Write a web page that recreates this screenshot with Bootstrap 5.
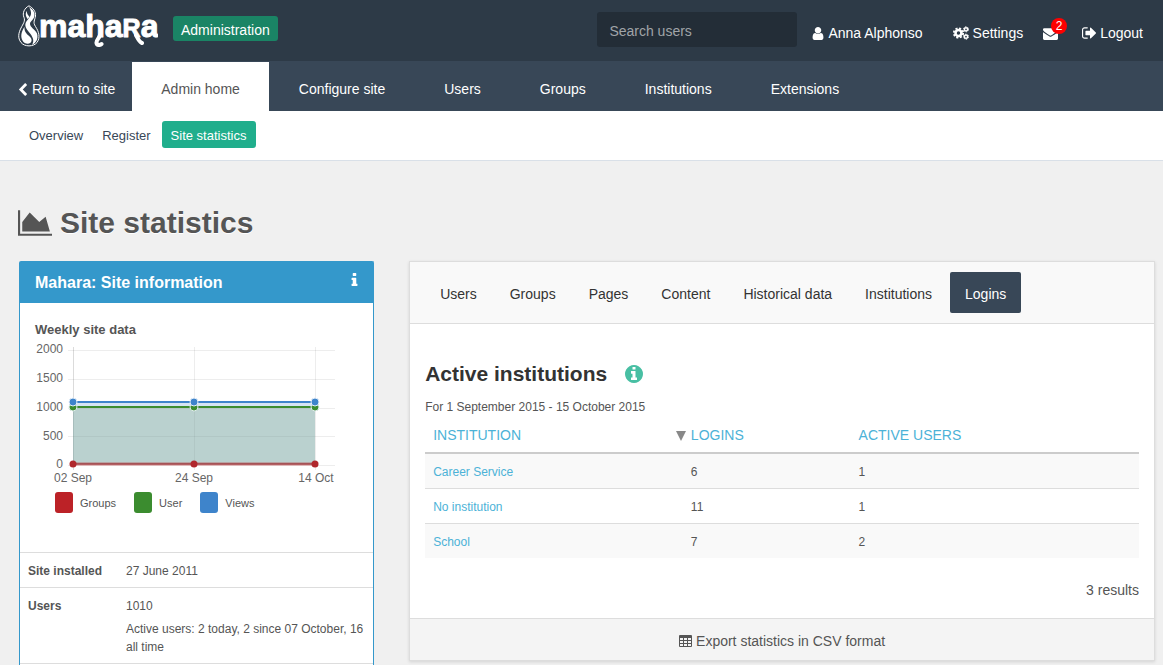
<!DOCTYPE html>
<html lang="en">
<head>
<meta charset="utf-8">
<meta name="viewport" content="width=device-width, initial-scale=1">
<title>Site statistics - Mahara</title>
<link href="https://cdn.jsdelivr.net/npm/bootstrap@5.3.0/dist/css/bootstrap.min.css" rel="stylesheet">
<style>
  body { font-family: "Liberation Sans", Arial, sans-serif; font-size: 14px; line-height: 20px; color: #555; background: #f0f0f0; }
  a { text-decoration: none; }
  .icon { fill: currentColor; flex: none; }

  .site-header { background: #2d3a47; padding: 0 20px 0 18px; min-height: 61px; }
  .site-logo { margin-top: 5px; }
  .admin-tag { background: #1a8465; color: #fff; font-size: 14px; line-height: 22px; padding: 3px 8px 0; border-radius: 3px; margin: 16px 0 0 15px; }
  .site-search { width: 200px; margin: 12px 15px 0 0; }
  .site-search .form-control { height: 35px; padding: 8px 12px 6px; font-size: 14px; line-height: 21px; color: #fff; background: #232d37; border: 0; border-radius: 3px; }
  .site-search .form-control::placeholder { color: #a0a4a8; opacity: 1; }
  .user-links { margin-top: 23px; }
  .user-links a { color: #fff; gap: 4px; }
  .user-links .settings { margin-left: 30px; }
  .unread { top: -9px; left: 8px; width: 16px; height: 16px; border-radius: 50%; background: #f00; color: #fff; font-size: 12px; line-height: 17px; text-align: center; }

  .main-nav { background: #384757; padding-top: 1px; gap: 1px; }
  .main-nav .nav-link { color: #fff; padding: 17px 29px 12px; line-height: 20px; }
  .main-nav .nav-link.back { padding-left: 18px; padding-right: 16px; gap: 4px; }
  .main-nav .nav-link.active { background: #fff; color: #555; }

  .sub-nav { background: #fff; border-bottom: 1px solid #d9e0e8; padding: 10px 21px 12px; font-size: 13px; gap: 2px; }
  .sub-nav .nav-link { color: #384757; padding: 5px 9px 2px 8px; border-radius: 3px; }
  .sub-nav .nav-link.active { background: #20ae8c; color: #fff; padding-left: 9px; padding-right: 10px; }

  .page-title { font-size: 30px; line-height: 34px; font-weight: 700; margin: 45px 0 21px 18px; gap: 8px; text-shadow: 0 1px 0 #fff; }
  .stats-grid { display: grid; grid-template-columns: minmax(0, 10fr) minmax(0, 21fr); gap: 35px; padding: 0 8px 0 19px; }
  @media (max-width: 900px) { .stats-grid { grid-template-columns: minmax(0, 1fr); } }

  .info-panel { background: #fff; border: 1px solid #3498cb; border-bottom: 0; border-radius: 2px 2px 0 0; }
  .info-panel > h2 { background: #3498cb; color: #fff; font-size: 16px; line-height: 20px; font-weight: 700; padding: 11px 15px 10px; }
  .chart-block { padding: 18px 15px 38px; }
  .chart-block h3 { font-size: 13px; line-height: 18px; font-weight: 700; margin-bottom: 3px; }
  .chart-block figcaption { margin: 5px 0 0 20px; gap: 18px; font-size: 11px; line-height: 22px; }
  .legend-item { gap: 7px; }
  .swatch { width: 18px; height: 21px; border-radius: 3px; }
  .chart-svg text { font-size: 12px; fill: #666; }
  .facts th, .facts td, .facts p { font-size: 12px; line-height: 18px; color: #555; }
  .facts th, .facts td { padding: 9px 8px 7px; border-top: 1px solid #ddd; vertical-align: top; }
  .facts tr:last-child > * { border-bottom: 1px solid #ddd; }
  .facts th { width: 98px; }
  .facts p { margin-top: 5px; }

  .report { background: #fff; border: 1px solid #ddd; box-shadow: 0 1px 3px rgba(0, 0, 0, .12); }
  .report-tabs { background: #f9f9f9; border-bottom: 1px solid #ddd; padding: 10px 15px; gap: 3px; }
  .report-tabs .nav-link { color: #333; padding: 12px 15px 9px; border-radius: 2px; }
  .report-tabs .nav-link.active { background: #384757; color: #fff; }
  .report-body { padding: 38px 15px 18px; }
  .report-body h2 { font-size: 21px; line-height: 24px; font-weight: 700; color: #333; gap: 18px; margin-bottom: 12px; }
  .report-body h2 a { color: #48bfa3; }
  .period { font-size: 12px; line-height: 18px; }
  .logins { table-layout: fixed; margin-bottom: 22px; }
  .logins a { color: #4cb2d7; }
  .logins th { font-size: 14px; line-height: 20px; font-weight: 400; padding: 9px 8px 7px; border-bottom: 2px solid #ccc; }
  .logins td { font-size: 12px; line-height: 18px; color: #555; padding: 9px 8px 7px; border-bottom: 1px solid #ddd; }
  .logins tr:last-child td { border-bottom: 0; }
  .logins tbody tr:nth-child(odd) { background: #f9f9f9; }
  .logins .count { padding-left: 23px; }
  .sort-mark { width: 10px; height: 10px; fill: #888; margin-right: 5px; }
  .report-foot { background: #f4f4f4; border-top: 1px solid #ddd; padding: 12px 15px 9px; }
  .report-foot a { color: #555; gap: 4px; }
</style>
</head>
<body class="d-flex flex-column min-vh-100">

<header class="site-header d-flex align-items-start">
  <a class="site-logo" href="#" aria-label="Mahara">
    <svg class="d-block" width="140" height="42" viewBox="0 0 140 42" fill="#fff">
      <path d="M11 .8C6.500 3 4 8 6 12.500C7.500 16 5 19 3 23C.5 28-.5 33 3 37.500C6.500 42 15.500 42 19 37.500C22.500 32.500 21 27 17.500 21.500C14.500 17 17 15 17.500 11C18 6.500 15 3 11 .8Z" fill="none" stroke="#fff" stroke-width="1"/>
      <path d="M11 2C16 5 17.500 8.500 16 12.500C14.500 15.500 12 16.500 12 19C12 22 17 24.500 19 28.500C20.500 33 18.500 38 14 39.800C16.500 36 15 32.500 12.500 29C10 25.500 6.500 22.500 7.500 18.500C8.500 15 12.500 12.500 13 9C13.200 6.500 12.500 4.500 11 2Z"/>
      <path d="M9 6C6.500 9 8.500 12 9.500 14L11.500 12C10 10 8.500 8.500 9 6Z"/>
      <path d="M6.500 22C3 27 2.500 32 4.500 35.500C6.500 39.500 12.500 40 13.500 36C14.300 32.500 10.500 31 8.500 28.500C6.800 26.500 6.300 24.500 6.500 22Z"/>
      <text x="21" y="32" font-size="32" font-weight="700" stroke="#fff" stroke-width="1" stroke-linejoin="round">maha<tspan font-size="25">R</tspan>a</text>
      <path d="M82 30C81 34 78 35 78.500 38C79 40.500 82 40.500 83.500 39M118 30C120 34 121 37 124 38" fill="none" stroke="#fff" stroke-width="4" stroke-linecap="round"/>
    </svg>
  </a>
  <a class="admin-tag" href="#">Administration</a>
  <form class="site-search ms-auto" role="search">
    <input class="form-control" type="text" placeholder="Search users" aria-label="Search users">
  </form>
  <nav class="user-links d-flex" aria-label="Account">
    <a class="d-flex align-items-center" href="#"><svg class="icon" width="12" height="13" viewBox="192 128 1408 1536"><path d="M1536 1399q0 109-62.500 187t-150.500 78h-854q-88 0-150.500-78t-62.500-187q0-85 8.500-160.500t31.500-152 58.500-131 94-89 134.500-34.500q131 128 313 128t313-128q76 0 134.500 34.500t94 89 58.500 131 31.500 152 8.500 160.500zm-256-887q0 159-112.500 271.500t-271.500 112.500-271.500-112.500-112.500-271.500 112.500-271.500 271.500-112.500 271.500 112.500 112.500 271.500z"/></svg>Anna Alphonso</a>
    <a class="settings d-flex align-items-center" href="#"><svg class="icon" width="16" height="14" viewBox="0 0 16 14"><g fill="none" stroke="#fff"><circle cx="5.500" cy="7" r="3" stroke-width="2.600"/><circle cx="5.500" cy="7" r="4.700" stroke-width="1.800" stroke-dasharray="2.100 1.590"/><circle cx="13" cy="3.300" r="1.600" stroke-width="1.500"/><circle cx="13" cy="3.300" r="2.500" stroke-width="1" stroke-dasharray="1.500 1.118"/><circle cx="13" cy="10.700" r="1.600" stroke-width="1.500"/><circle cx="13" cy="10.700" r="2.500" stroke-width="1" stroke-dasharray="1.500 1.118"/></g></svg>Settings</a>
    <a class="d-flex align-items-center ms-3 ps-1" href="#" aria-label="Inbox"><span class="position-relative d-flex"><svg class="icon" width="15" height="13" viewBox="0 128 1792 1536"><path d="M1792 710v794q0 66-47 113t-113 47h-1472q-66 0-113-47t-47-113v-794q44 49 101 87 362 246 497 345 57 42 92.500 65.500t94.500 48 110 24.500h2q51 0 110-24.500t94.500-48 92.500-65.500q170-123 498-345 57-39 100-87zm0-294q0 79-49 151t-122 123q-376 261-468 325-10 7-42.500 31t-54 38.500-52 32.500-57.500 27-50 9h-2q-23 0-50-9t-57.500-27-52-32.500-54-38.500-42.500-31q-91-64-262-182.500t-205-142.500q-62-42-117-115.500t-55-136.500q0-78 41.500-130t118.500-52h1472q65 0 112.500 47t47.500 113z"/></svg><span class="unread position-absolute">2</span></span></a>
    <a class="d-flex align-items-center ms-4" href="#"><svg class="icon" width="14" height="12" viewBox="64 256 1568 1280"><path d="M704 1440q0 4 1 20t.5 26.500-3 23.500-10 19.500-20.500 6.500h-320q-119 0-203.500-84.500t-84.500-203.500v-704q0-119 84.500-203.500t203.500-84.500h320q13 0 22.500 9.500t9.500 22.500q0 4 1 20t.5 26.500-3 23.500-10 19.500-20.500 6.500h-320q-66 0-113 47t-47 113v704q0 66 47 113t113 47h312l11.500 1 11.500 3 8 5.500 7 9 2 13.500zm928-544q0 26-19 45l-544 544q-19 19-45 19t-45-19-19-45v-288h-448q-26 0-45-19t-19-45v-384q0-26 19-45t45-19h448v-288q0-26 19-45t45-19 45 19l544 544q19 19 19 45z"/></svg>Logout</a>
  </nav>
</header>

<nav class="main-nav nav" aria-label="Main">
  <a class="nav-link back d-flex align-items-center" href="#"><svg class="icon" width="10" height="13" viewBox="410 0 1036 1664"><path d="M1427 301l-531 531 531 531q19 19 19 45t-19 45l-166 166q-19 19-45 19t-45-19l-742-742q-19-19-19-45t19-45l742-742q19-19 45-19t45 19l166 166q19 19 19 45t-19 45z"/></svg>Return to site</a>
  <a class="nav-link active" aria-current="page" href="#">Admin home</a>
  <a class="nav-link" href="#">Configure site</a>
  <a class="nav-link" href="#">Users</a>
  <a class="nav-link" href="#">Groups</a>
  <a class="nav-link" href="#">Institutions</a>
  <a class="nav-link" href="#">Extensions</a>
</nav>

<nav class="sub-nav nav" aria-label="Admin home">
  <a class="nav-link" href="#">Overview</a>
  <a class="nav-link" href="#">Register</a>
  <a class="nav-link active" aria-current="page" href="#">Site statistics</a>
</nav>

<main class="flex-grow-1 d-flex flex-column">
  <h1 class="page-title d-flex align-items-center"><svg class="icon" width="34" height="26" viewBox="0 128 2048 1536"><path d="M2048 1536v128h-2048v-1536h128v1408h1920zm-384-1024l256 896h-1664v-576l448-576 576 576z"/></svg>Site statistics</h1>

  <div class="stats-grid flex-grow-1">
    <section class="info-panel">
      <h2 class="d-flex justify-content-between m-0">Mahara: Site information
        <a class="text-white d-flex" href="#" aria-label="Help"><svg class="icon" width="7" height="13" viewBox="576 128 640 1408"><path d="M1216 1344v128q0 26-19 45t-45 19h-512q-26 0-45-19t-19-45v-128q0-26 19-45t45-19h64v-384h-64q-26 0-45-19t-19-45v-128q0-26 19-45t45-19h384q26 0 45 19t19 45v576h64q26 0 45 19t19 45zm-128-1152v192q0 26-19 45t-45 19h-256q-26 0-45-19t-19-45v-192q0-26 19-45t45-19h256q26 0 45 19t19 45z"/></svg></a>
      </h2>
      <div class="chart-block">
        <h3>Weekly site data</h3>
        <figure class="m-0">
          <svg class="chart-svg d-block" width="301" height="145" viewBox="0 0 301 145">
            <g stroke="#000" stroke-opacity=".07">
              <path d="M33 8.500H300M33 37.500H300M33 66.500H300M33 94.500H300M33 123.500H300M159.500 5V128M280.500 5V128"/>
              <path d="M38.500 5V128" stroke-opacity=".14"/>
            </g>
            <path d="M38 122V60H280V122Z" fill="#3e84cb" fill-opacity=".22"/>
            <path d="M38 122V65H280V122Z" fill="#7fa77c" fill-opacity=".3"/>
            <path d="M38 122H280" stroke="#b82025" stroke-opacity=".5" stroke-width="3"/>
            <path d="M38 122H280" stroke="#8e3034" stroke-width="1"/>
            <path d="M38 65H280" stroke="#3b8c2f" stroke-width="2"/>
            <path d="M38 60H280" stroke="#3e84cb" stroke-width="2"/>
            <g fill="#b0272c"><circle cx="38" cy="122" r="3.500"/><circle cx="159" cy="122" r="3.500"/><circle cx="280" cy="122" r="3.500"/></g>
            <g fill="#3b8c2f" stroke="#dfecea"><circle cx="38" cy="65" r="4"/><circle cx="159" cy="65" r="4"/><circle cx="280" cy="65" r="4"/></g>
            <g fill="#3e84cb" stroke="#e6eff8"><circle cx="38" cy="60" r="4"/><circle cx="159" cy="60" r="4"/><circle cx="280" cy="60" r="4"/></g>
            <g text-anchor="end"><text x="28" y="11">2000</text><text x="28" y="40">1500</text><text x="28" y="69">1000</text><text x="28" y="98">500</text><text x="28" y="126">0</text></g>
            <g text-anchor="middle"><text x="38" y="140">02 Sep</text><text x="159" y="140">24 Sep</text><text x="281" y="140">14 Oct</text></g>
          </svg>
          <figcaption class="d-flex">
            <span class="legend-item d-flex"><span class="swatch" style="background:#bc2227"></span>Groups</span>
            <span class="legend-item d-flex"><span class="swatch" style="background:#3b8c2f"></span>User</span>
            <span class="legend-item d-flex"><span class="swatch" style="background:#3e84cb"></span>Views</span>
          </figcaption>
        </figure>
      </div>
      <table class="facts w-100">
        <tr><th scope="row">Site installed</th><td>27 June 2011</td></tr>
        <tr><th scope="row">Users</th><td>1010<p class="mb-0">Active users: 2 today, 2 since 07 October, 16 all time</p></td></tr>
      </table>
    </section>

    <section class="report align-self-start">
      <nav class="report-tabs nav" aria-label="Statistics">
        <a class="nav-link" href="#">Users</a>
        <a class="nav-link" href="#">Groups</a>
        <a class="nav-link" href="#">Pages</a>
        <a class="nav-link" href="#">Content</a>
        <a class="nav-link" href="#">Historical data</a>
        <a class="nav-link" href="#">Institutions</a>
        <a class="nav-link active" aria-current="page" href="#">Logins</a>
      </nav>
      <div class="report-body">
        <h2 class="d-flex align-items-center">Active institutions
          <a class="d-flex" href="#" aria-label="Help"><svg class="icon" width="18" height="18" viewBox="128 128 1536 1536"><path d="M1152 1376v-160q0-14-9-23t-23-9h-96v-512q0-14-9-23t-23-9h-320q-14 0-23 9t-9 23v160q0 14 9 23t23 9h96v320h-96q-14 0-23 9t-9 23v160q0 14 9 23t23 9h448q14 0 23-9t9-23zm-128-896v-160q0-14-9-23t-23-9h-192q-14 0-23 9t-9 23v160q0 14 9 23t23 9h192q14 0 23-9t9-23zm640 416q0 209-103 385.500t-279.500 279.500-385.500 103-385.500-103-279.500-279.500-103-385.500 103-385.500 279.500-279.500 385.500-103 385.500 103 279.500 279.500 103 385.500z"/></svg></a>
        </h2>
        <p class="period mb-0">For 1 September 2015 - 15 October 2015</p>
        <table class="logins w-100">
          <colgroup><col style="width:34%"><col style="width:25.6%"><col></colgroup>
          <thead>
            <tr>
              <th scope="col"><a href="#">INSTITUTION</a></th>
              <th scope="col"><a href="#"><svg class="sort-mark" viewBox="0 0 10 10" aria-hidden="true"><path d="M0 0H10L5 10Z"/></svg>LOGINS</a></th>
              <th scope="col"><a href="#">ACTIVE USERS</a></th>
            </tr>
          </thead>
          <tbody>
            <tr><td><a href="#">Career Service</a></td><td class="count">6</td><td>1</td></tr>
            <tr><td><a href="#">No institution</a></td><td class="count">11</td><td>1</td></tr>
            <tr><td><a href="#">School</a></td><td class="count">7</td><td>2</td></tr>
          </tbody>
        </table>
        <p class="text-end mb-0">3 results</p>
      </div>
      <div class="report-foot d-flex justify-content-center">
        <a class="d-flex align-items-center" href="#"><svg class="icon" width="13" height="12" viewBox="0 0 13 12"><path fill-rule="evenodd" d="M1 0H12Q13 0 13 1V11Q13 12 12 12H1Q0 12 0 11V1Q0 0 1 0ZM1 3V5H4V3ZM5 3V5H8V3ZM9 3V5H12V3ZM1 6V8H4V6ZM5 6V8H8V6ZM9 6V8H12V6ZM1 9V11H4V9ZM5 9V11H8V9ZM9 9V11H12V9Z"/></svg>Export statistics in CSV format</a>
      </div>
    </section>
  </div>
</main>

<script src="https://cdn.jsdelivr.net/npm/bootstrap@5.3.0/dist/js/bootstrap.bundle.min.js"></script>
</body>
</html>
